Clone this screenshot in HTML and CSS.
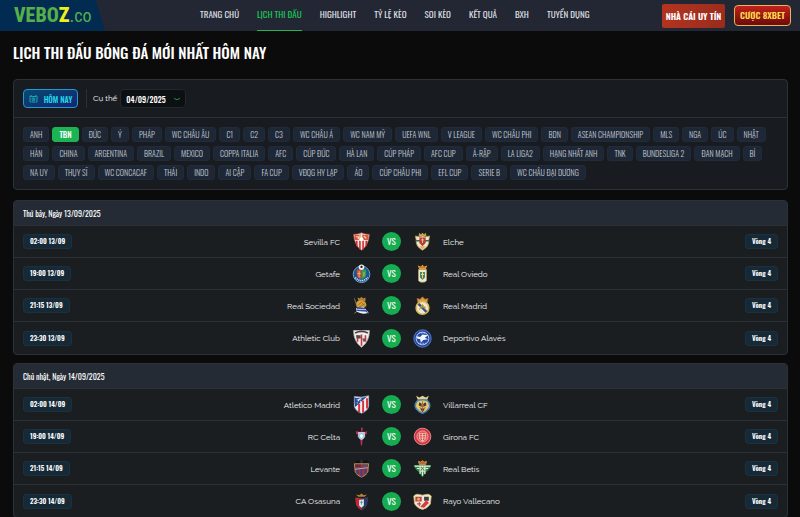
FILE: index.html
```html
<!DOCTYPE html>
<html lang="vi">
<head>
<meta charset="utf-8">
<meta name="viewport" content="width=device-width, initial-scale=1">
<title>Lịch thi đấu bóng đá</title>
<link rel="stylesheet" href="styles.css">
</head>
<body>
<header class="topbar">
  <a class="logo" href="#"><span class="logo-name">VEBO<b>Z</b></span><span class="logo-tld">.co</span></a>
  <nav class="nav">
    <a href="#">TRANG CHỦ</a>
    <a href="#" class="active">LỊCH THI ĐẤU</a>
    <a href="#">HIGHLIGHT</a>
    <a href="#">TỶ LỆ KÈO</a>
    <a href="#">SOI KÈO</a>
    <a href="#">KẾT QUẢ</a>
    <a href="#">BXH</a>
    <a href="#">TUYỂN DỤNG</a>
  </nav>
  <div class="promo">
    <a class="promo-red" href="#">NHÀ CÁI UY TÍN</a>
    <a class="promo-gold" href="#">CƯỢC 8XBET</a>
  </div>
</header>
<main class="page">
  <h1>LỊCH THI ĐẤU BÓNG ĐÁ MỚI NHẤT HÔM NAY</h1>
  <section class="panel filter">
    <div class="filter-top">
      <button class="today" type="button">
        <svg viewBox="0 0 18 16" aria-hidden="true"><path d="M5 2H2v12h3M13 2h3v12h-3M5 1v3M13 1v3M6 3h6M6 14h6" /><circle cx="9" cy="8.500" r="3"/><path d="M9 7v2h1.500"/></svg>
        <span>HÔM NAY</span>
      </button>
      <div class="specific">
        <label for="day">Cụ thể</label>
        <span class="select-box">
          <select id="day"><option>04/09/2025</option></select>
          <svg viewBox="0 0 8 4" aria-hidden="true"><path d="M1 1l2 1.500h2L7 1"/></svg>
        </span>
      </div>
    </div>
    <div class="leagues">
      <div class="chips"><button>ANH</button><button class="on">TBN</button><button>ĐỨC</button><button>Ý</button><button>PHÁP</button><button>WC CHÂU ÂU</button><button>C1</button><button>C2</button><button>C3</button><button>WC CHÂU Á</button><button>WC NAM MỸ</button><button>UEFA WNL</button><button>V LEAGUE</button><button>WC CHÂU PHI</button><button>BDN</button><button>ASEAN CHAMPIONSHIP</button><button>MLS</button><button>NGA</button><button>ÚC</button><button>NHẬT</button></div>
      <div class="chips"><button>HÀN</button><button>CHINA</button><button>ARGENTINA</button><button>BRAZIL</button><button>MEXICO</button><button>COPPA ITALIA</button><button>AFC</button><button>CÚP ĐỨC</button><button>HÀ LAN</button><button>CÚP PHÁP</button><button>AFC CUP</button><button>Ả-RẬP</button><button>LA LIGA2</button><button>HẠNG NHẤT ANH</button><button>TNK</button><button>BUNDESLIGA 2</button><button>ĐAN MẠCH</button><button>BỈ</button></div>
      <div class="chips"><button>NA UY</button><button>THỤY SĨ</button><button>WC CONCACAF</button><button>THÁI</button><button>INDO</button><button>AI CẬP</button><button>FA CUP</button><button>VĐQG HY LẠP</button><button>ÁO</button><button>CÚP CHÂU PHI</button><button>EFL CUP</button><button>SERIE B</button><button>WC CHÂU ĐẠI DƯƠNG</button></div>
    </div>
  </section>

  <section class="panel">
    <h2>Thứ bảy, Ngày 13/09/2025</h2>
    <ul class="matches">
      <li>
        <time class="tag">02:00 13/09</time>
        <span class="home">Sevilla FC</span>
        <svg class="crest" viewBox="0 0 24 24"><path d="M2 3q5 0 10-2 5 2 10 2-1 14-10 20Q3 17 2 3z" fill="#f3e9e4" stroke="#b8433c"/><path d="M6 11v7M10 11v11M14 11v11M18 11v7" stroke="#cf2b2f" stroke-width="2"/><path d="M3 4l8-1v7H4zM13 3l8 1-1 6h-7z" fill="#d3573f"/><path d="M5 6h3v3M15 5l3 3M10 4v6" stroke="#f4e2b0" stroke-width="1.500" fill="none"/><circle cx="12" cy="9" r="2.500" fill="#fff"/></svg>
        <span class="vs">VS</span>
        <svg class="crest" viewBox="0 0 24 24"><path d="M7 5l1-4 2 2 2-2 2 2 2-2 1 4z" fill="#c9a84c"/><path d="M3 5l5 1 4-1 4 1 5-1-1 5q1 8-8 13-9-5-8-13z" fill="#eee6d5" stroke="#bd9a56"/><path d="M4 10h16v2H4z" fill="#287148"/><path d="M8 7h8v7l-4 4-4-4z" fill="#b93b35"/><path d="M8 18h8l-4 4z" fill="#d9b25a"/><path d="M10 10h4M12 8v6" stroke="#efd68e"/></svg>
        <span class="away">Elche</span>
        <span class="tag">Vòng 4</span>
      </li>
      <li>
        <time class="tag">19:00 13/09</time>
        <span class="home">Getafe</span>
        <svg class="crest" viewBox="0 0 24 24"><circle cx="12" cy="13" r="10.500" fill="#17559a" stroke="#8fb5d5"/><path d="M4 17q8 8 16 0" stroke="#dce8ee" stroke-width="2" stroke-dasharray="1.500 1" fill="none"/><path d="M6 7h6v12q-6-1-6-7z" fill="#d54a32"/><path d="M12 7h6v5q0 6-6 7z" fill="#3b994c"/><path d="M9 9v8M7 12h4M15 10v6" stroke="#edc663"/><circle cx="12" cy="4" r="3.500" fill="#eee"/><path d="M10.500 3l1.500-1 1.500 1-.5 2h-2z" fill="#222"/></svg>
        <span class="vs">VS</span>
        <svg class="crest" viewBox="0 0 24 24"><path d="M8 7L6 2l4 1 2-2 2 2 4-1-2 5z" fill="#e0a52e"/><path d="M8 4h8" stroke="#c7483a"/><path d="M7 7h10v14q-1 2-5 2t-5-2z" fill="#ebe9dc" stroke="#bba555"/><path d="M9 10h6v7l-3 3-3-3z" fill="#2e765a"/><path d="M12 10v8M10 13h4" stroke="#eed57a" stroke-width="1.500"/></svg>
        <span class="away">Real Oviedo</span>
        <span class="tag">Vòng 4</span>
      </li>
      <li>
        <time class="tag">21:15 13/09</time>
        <span class="home">Real Sociedad</span>
        <svg class="crest" viewBox="0 0 24 24"><path d="M8 6L7 2l3 1 2-2 2 2 3-1v5z" fill="#b88032"/><path d="M5 10q1-5 8-4 6 1 5 7-6 3-11 3z" fill="#d4a339"/><path d="M8 11l4-3 4 4M9 14l7-4" stroke="#965c23" fill="none"/><path d="M3 3l5 15M3 22l5-4" stroke="#ae8548"/><path d="M5 15q6 1 10-1l6 7q-8 3-15-1z" fill="#f0f3f7"/><path d="M6 15l11 1M6 18l13 1" stroke="#314eaa" stroke-width="2"/><path d="M17 18l4 5" stroke="#344c9b"/></svg>
        <span class="vs">VS</span>
        <svg class="crest" viewBox="0 0 24 24"><path d="M6 8L5 3l4 1 3-3 3 3 4-1-1 5z" fill="#d5a23b" stroke="#a64b37"/><circle cx="12" cy="15" r="8" fill="#eee9d5" stroke="#d9ba55" stroke-width="2"/><path d="M7 10l10 10" stroke="#334e7f" stroke-width="3"/><path d="M8 17l4-6 4 6M9 14h7" stroke="#bb983c" stroke-width="1.500" fill="none"/></svg>
        <span class="away">Real Madrid</span>
        <span class="tag">Vòng 4</span>
      </li>
      <li>
        <time class="tag">23:30 13/09</time>
        <span class="home">Athletic Club</span>
        <svg class="crest" viewBox="0 0 24 24"><path d="M2 2h20q0 14-10 21Q2 16 2 2z" fill="#eee" stroke="#bfb9b5"/><path d="M4 5q8-4 16 0" stroke="#45413f" stroke-width="2" fill="none"/><path d="M7 8v8M12 7v14M17 8v8" stroke="#ce353a" stroke-width="2"/><path d="M5 8h6v4H6z" fill="#514c48"/><path d="M13 12h5l-3 5z" fill="#63524c"/></svg>
        <span class="vs">VS</span>
        <svg class="crest" viewBox="0 0 24 24"><circle cx="12" cy="12" r="11" fill="#2347a5" stroke="#6686cc"/><circle cx="12" cy="12" r="8" fill="none" stroke="#e3e9f5"/><path d="M5 9l4 1 3-3 7 1-4 3 4 2-6 1-3 3-1-4-4-1z" fill="#f2f5fb"/><path d="M7 18h10M8 5h8" stroke="#fff" stroke-dasharray="1 1"/></svg>
        <span class="away">Deportivo Alavés</span>
        <span class="tag">Vòng 4</span>
      </li>
    </ul>
  </section>

  <section class="panel">
    <h2>Chủ nhật, Ngày 14/09/2025</h2>
    <ul class="matches">
      <li>
        <time class="tag">02:00 14/09</time>
        <span class="home">Atletico Madrid</span>
        <svg class="crest" viewBox="0 0 24 24"><path d="M3 2q9 2 18-1v13q-1 6-9 9-8-3-9-9z" fill="#eee" stroke="#a9b5d4"/><path d="M9 11v11M14 7v15M19 4v13" stroke="#d53440" stroke-width="2.500"/><path d="M3 3q8 2 16-1L4 15z" fill="#294994"/><path d="M8 8q0-4 4-3M6 6h1M10 8h1M6 10h1" stroke="#fff" stroke-width="1.500" fill="none"/></svg>
        <span class="vs">VS</span>
        <svg class="crest" viewBox="0 0 24 24"><path d="M6 6L4 1l4 2 4-2 4 2 4-2-2 5z" fill="#e8d08a"/><path d="M6 7q6-2 12 0 5 5 2 10-3 4-8 6-5-2-8-6-3-5 2-10z" fill="#e6cc6a" stroke="#4f86b2" stroke-width="2"/><path d="M8 9l3 2v4l-4-2zM16 9l-3 2v4l4-2zM9 17h6l-3 5z" fill="#423b35"/><path d="M12 8v13M8 16l3 1M16 16l-3 1" stroke="#bc4a36"/></svg>
        <span class="away">Villarreal CF</span>
        <span class="tag">Vòng 4</span>
      </li>
      <li>
        <time class="tag">19:00 14/09</time>
        <span class="home">RC Celta</span>
        <svg class="crest" viewBox="0 0 24 24"><path d="M11 1h3l-1 5h4l2-1v4l-5-1-1 14-1 2-1-2-1-14-5 1V5l4 1h3z" fill="#b52952"/><path d="M8 7h8v5q-1 3-4 4-3-1-4-4z" fill="#9cc6e5" stroke="#d7dce0"/><path d="M10 11h4M12 9v5" stroke="#fff" stroke-width="2"/></svg>
        <span class="vs">VS</span>
        <svg class="crest" viewBox="0 0 24 24"><circle cx="12" cy="12" r="10.500" fill="#d9313f" stroke="#eda5a6"/><circle cx="12" cy="12" r="7" fill="#d84951" stroke="#f0c4bc"/><path d="M8 8h8v7l-4 3-4-3zM8 11h8M8 14h8M12 8v10" fill="none" stroke="#f6d4b7"/></svg>
        <span class="away">Girona FC</span>
        <span class="tag">Vòng 4</span>
      </li>
      <li>
        <time class="tag">21:15 14/09</time>
        <span class="home">Levante</span>
        <svg class="crest" viewBox="0 0 24 24"><path d="M6 6q-5-4 2-4l4 3 4-3q7 0 2 4z" fill="#101116"/><path d="M12 1v5" stroke="#2b2e38" stroke-width="3"/><path d="M3 6h18l-1 10q-2 5-8 7-6-2-8-7z" fill="#a92f45" stroke="#c8a760"/><path d="M7 12v7M12 12v10M17 12v7" stroke="#31487f" stroke-width="2.500"/><path d="M4 7h7v3H4z" fill="#4a3c3c"/><path d="M13 7h7v3h-7z" fill="#55555d"/><path d="M4 13l16-2" stroke="#c4c4cc"/></svg>
        <span class="vs">VS</span>
        <svg class="crest" viewBox="0 0 24 24"><path d="M8 7L7 3l3 1 2-2 2 2 3-1-1 4z" fill="#ba6530" stroke="#e0a549"/><path d="M1 8h22q-2 6-6 8l-5 7-5-7Q3 14 1 8z" fill="#2c8a50"/><path d="M2 9h20M5 12h3M16 12h3M9 9v10M12 9v12M15 9v10" stroke="#eeeed9" stroke-width="1.500"/><path d="M9 11h6v5H9z" fill="#d9e4cf"/><path d="M10 15l2-4 2 4" stroke="#287342" fill="none"/></svg>
        <span class="away">Real Betis</span>
        <span class="tag">Vòng 4</span>
      </li>
      <li>
        <time class="tag">23:30 14/09</time>
        <span class="home">CA Osasuna</span>
        <svg class="crest" viewBox="0 0 24 24"><path d="M8 6L5 3l4 1 3-2 3 2 4-1-3 3z" fill="#b28532"/><path d="M4 7l8 1 8-1-1 9q-2 4-7 7-5-3-7-7z" fill="#bb2a37"/><path d="M12 8l8-1-1 9q-2 4-7 7z" fill="#253b6c"/><path d="M9 10l6-1v8l-3 3-3-3z" fill="#e0e7e7"/><path d="M10 13h4M12 11v5" stroke="#4c8a9b"/></svg>
        <span class="vs">VS</span>
        <svg class="crest" viewBox="0 0 24 24"><path d="M1 5q3-3 6-2l5 1 5-1q3-1 6 2l-1 10q-4 6-10 7Q6 21 2 15z" fill="#efead8" stroke="#d7bd68"/><path d="M3 6h8v6H3z" fill="#b74535"/><path d="M14 6h6v5h-6z" fill="#423d40"/><path d="M9 19l8-9 3 4-6 6z" fill="#d43b48"/><circle cx="7" cy="9" r="2" fill="#e0a36d"/><path d="M5 15h5M8 13v5" stroke="#b5495b" stroke-width="1.500"/></svg>
        <span class="away">Rayo Vallecano</span>
        <span class="tag">Vòng 4</span>
      </li>
    </ul>
  </section>
</main>
</body>
</html>
```
FILE: styles.css
```css
:root {
  --narrow: Oswald, "Roboto Condensed", "Liberation Sans Narrow", "Liberation Sans", sans-serif;
  --body: Raleway, Lato, "Open Sans", sans-serif;
  --line: #2c3138;
}
* { box-sizing: border-box; }
body {
  margin: 0;
  background: #0b0b0b;
  color: #f4f5f6;
  font: 8px/12px var(--body);
  overflow-x: hidden;
}
a { color: inherit; text-decoration: none; }
button, select { font-family: var(--narrow); margin: 0; }

.topbar {
  display: flex;
  align-items: stretch;
  height: 31px;
  padding-right: 9px;
  background: #222733;
}
.logo {
  width: 105px;
  flex: none;
  padding-left: 14px;
  display: flex;
  align-items: baseline;
  background: #022b51;
  clip-path: polygon(0 0, 91% 0, 100% 100%, 0 100%);
  color: #55b04c;
  font-family: "Liberation Sans Narrow", "Roboto Condensed", Oswald, sans-serif;
}
.logo-name { font-size: 20px; line-height: 30px; font-weight: 800; }
.logo-name b { color: #eef01c; }
.logo-tld { font-size: 18px; line-height: 30px; }
.nav {
  display: flex;
  gap: 18px;
  margin-left: 95px;
  font: 9px/29px var(--narrow);
  color: #dcdde0;
  white-space: nowrap;
}
.nav .active { color: #1fc35a; border-bottom: 1px solid #22b455; }
.promo {
  display: flex;
  align-items: center;
  gap: 9px;
  margin-left: auto;
  font: 600 9px/20px var(--narrow);
  text-align: center;
  white-space: nowrap;
}
.promo a { border-radius: 2px; }
.promo-red {
  width: 63px;
  padding: 2px 0;
  color: #fff;
  background: linear-gradient(110deg, #b43520, #992b1d);
}
.promo .promo-gold {
  width: 57px;
  line-height: 19px;
  border: 1px solid #e9b554;
  border-radius: 4px;
  color: #ffd94b;
  background: linear-gradient(#c3211a, #690b0b);
}

.page { padding: 0 12px 0 13px; }
h1 {
  margin: 0;
  padding: 9px 0 15px;
  font: 500 15px/24px var(--narrow);
  color: #fff;
}
.panel {
  margin-bottom: 8px;
  border: 1px solid var(--line);
  border-radius: 4px;
  background: #1a1e21;
  overflow: hidden;
}
.filter { margin-bottom: 10px; background: #181b20; }
.filter-top {
  display: flex;
  align-items: center;
  padding: 9px;
  border-bottom: 1px solid var(--line);
}
.today {
  display: flex;
  align-items: center;
  justify-content: center;
  gap: 6px;
  width: 55px;
  height: 19px;
  padding: 0;
  border: 1px solid #2398d2;
  border-radius: 4px;
  background: linear-gradient(160deg, #064a70, #172473);
  color: #21dcea;
  font-size: 8px;
  font-weight: 500;
  white-space: nowrap;
}
.today svg { width: 9px; height: 8px; fill: none; stroke: #20c6c8; stroke-width: 1.5; }
.specific {
  display: flex;
  align-items: center;
  gap: 3px;
  margin-left: 8px;
  padding-left: 6px;
  border-left: 1px solid var(--line);
  line-height: 19px;
}
.select-box { display: grid; align-items: center; }
.select-box > * { grid-area: 1 / 1; }
.select-box select {
  appearance: none;
  width: 66px;
  height: 19px;
  padding: 0 5px;
  border: 1px solid #22282c;
  border-radius: 4px;
  background: #0d1012;
  color: #fff;
  font-size: 8px;
  font-weight: 500;
}
.select-box svg {
  justify-self: end;
  width: 8px;
  height: 4px;
  margin-right: 5px;
  fill: none;
  stroke: #1e8f3c;
  pointer-events: none;
}
.leagues { display: grid; gap: 4px; padding: 9px; }
.chips { display: flex; gap: 3px; }
.chips button {
  height: 15px;
  padding: 0 6px;
  border: 1px solid #222b39;
  border-radius: 3px;
  background: #1e2736;
  color: #c6cbd3;
  font-size: 8px;
  font-weight: 300;
  line-height: 13px;
  white-space: nowrap;
}
.chips .on { background: #1cb355; border-color: #1cb355; color: #fff; font-weight: 500; }

h2 {
  margin: 0;
  padding: 0 9px;
  border-bottom: 1px solid var(--line);
  background: #252b35;
  font: 400 8px/24px var(--narrow);
  color: #fff;
}
.matches { margin: 0; padding: 0; list-style: none; }
.matches li {
  display: grid;
  grid-template-columns: 50px 1fr 20px 19px 20px 1fr 68px;
  column-gap: 11px;
  align-items: center;
  justify-items: center;
  height: 32px;
  padding: 0 9px;
  border-bottom: 1px solid var(--line);
}
.matches li:last-child { border-bottom: 0; }
.home { justify-self: end; }
.away { justify-self: start; }
.crest { width: 19px; height: 19px; fill: none; }
.vs {
  width: 19px;
  border-radius: 50%;
  background: #16ac50;
  color: #fff;
  font: 9px/19px var(--narrow);
  text-align: center;
}
.tag {
  justify-self: start;
  padding: 0 6px;
  border: 1px solid #1c303e;
  border-radius: 3px;
  background: #162936;
  color: #fff;
  font: 600 7px/13px var(--narrow);
  white-space: nowrap;
}
.tag:last-child { justify-self: end; }
```
